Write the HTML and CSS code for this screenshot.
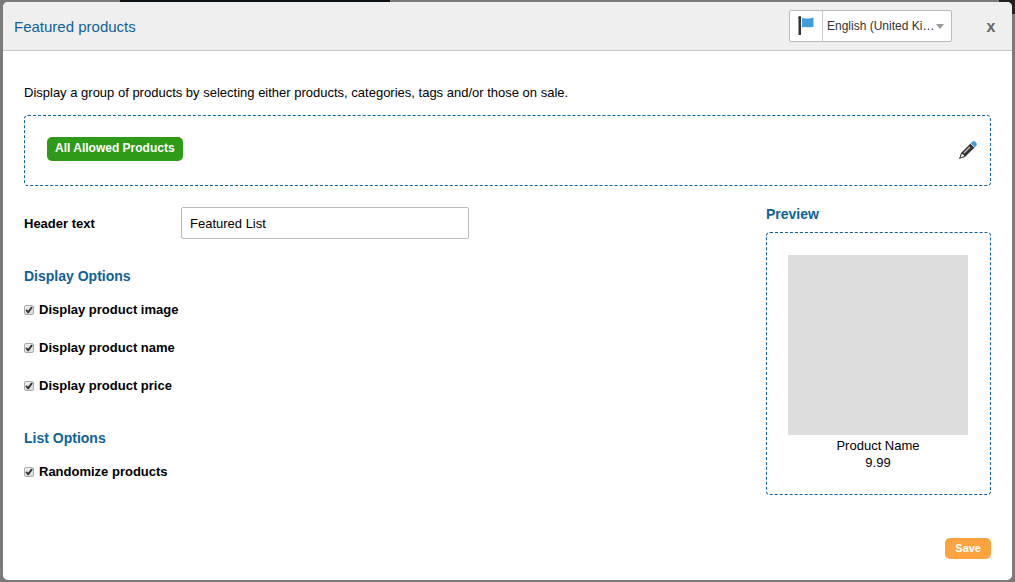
FILE: index.html
```html
<!DOCTYPE html>
<html lang="en">
<head>
    <meta charset="utf-8" />
    <title>Featured products</title>
    <link rel="stylesheet" href="styles.css">
</head>
<body>
    <div class="dialog" role="dialog" aria-labelledby="dialog-title">
        <header class="dialog-header">
            <h1 class="dialog-title" id="dialog-title">Featured products</h1>
            <div class="language">
                <label class="language-flag" for="language" aria-label="Language">
                    <svg width="16" height="20" viewBox="0 0 16 20">
                        <path d="M4 2.500C7 1.500 8.500 3.800 15.500 1.600V10.500C10 12.500 8 10 4 11.500Z" fill="#429ddb"/>
                        <path d="M.5 1H3V19H.5Z" fill="#333"/>
                        <circle cx="1.800" cy="1.500" r="1.500" fill="#333"/>
                    </svg>
                </label>
                <select class="language-select" id="language">
                    <option>English (United Kingdom)</option>
                </select>
                <span class="language-arrow"></span>
            </div>
            <button class="close" type="button">x</button>
        </header>

        <form class="dialog-body">
            <p class="intro">Display a group of products by selecting either products, categories, tags and/or those on sale.</p>

            <div class="selection dashed">
                <span class="tag">All Allowed Products</span>
                <button class="edit" type="button" aria-label="Edit">
                    <svg width="20" height="20" viewBox="0 0 20 20">
                        <path d="M1 19L3 13L12.500 3.500L16.500 7.500L7 17Z" fill="#333"/>
                        <path d="M2.500 17.500L4 13.500L6.500 16Z" fill="#fff"/>
                        <path d="M6 13L12 7" stroke="#c4c4c4" stroke-width="1.200"/>
                        <path d="M12.800 3.200L14.500 1.500Q16 .500 17.500 2L18 2.500Q19.500 4 18.500 5.500L16.800 7.200Z" fill="#429ddb"/>
                        <path d="M12.500 3.500L16.500 7.500" stroke="#b8dcf2"/>
                    </svg>
                </button>
            </div>

            <div class="columns">
                <div class="options">
                    <div class="field">
                        <label class="field-label" for="header-text">Header text</label>
                        <input class="field-input" id="header-text" type="text" value="Featured List">
                    </div>

                    <section class="group">
                        <h2 class="heading">Display Options</h2>
                        <label class="check"><input type="checkbox" checked>Display product image</label>
                        <label class="check"><input type="checkbox" checked>Display product name</label>
                        <label class="check"><input type="checkbox" checked>Display product price</label>
                    </section>

                    <section class="group">
                        <h2 class="heading">List Options</h2>
                        <label class="check"><input type="checkbox" checked>Randomize products</label>
                    </section>
                </div>

                <aside class="preview">
                    <h2 class="heading">Preview</h2>
                    <div class="preview-card dashed">
                        <div class="preview-image"></div>
                        <div>Product Name</div>
                        <div>9.99</div>
                    </div>
                </aside>
            </div>

            <div class="actions">
                <button class="save" type="button">Save</button>
            </div>
        </form>
    </div>
</body>
</html>
```

FILE: styles.css
```css
* {
    box-sizing: border-box;
}

body {
    margin: 0;
    padding: 2px 3px;
    min-height: 100vh;
    display: flex;
    background-color: #7b7b7b;
    /* slices of the page behind the dialog */
    background-image: linear-gradient(#0b1216, #0b1216), linear-gradient(#222, #222);
    background-size: 270px 2px, 16px 14px;
    background-position: 120px 0, right 0 top 0;
    background-repeat: no-repeat;
    color: #000;
    font: 13px/17px "Liberation Sans", Arial, sans-serif;
}

button, input, select {
    font: inherit;
    color: inherit;
}

button {
    border: 0;
    padding: 0;
    background: none;
    cursor: pointer;
}

svg {
    display: block;
}

.dialog {
    flex: 1;
    background: #fff;
    border-radius: 5px;
    overflow: hidden;
}

.dialog-header {
    display: flex;
    align-items: center;
    height: 49px;
    padding: 0 13px 0 11px;
    background: #efefef;
    border-bottom: 1px solid #c8c8c8;
}

.dialog-title {
    flex: 1;
    margin: 0;
    font-size: 15px;
    font-weight: normal;
    color: #0f6299;
}

.language {
    display: flex;
    align-items: center;
    width: 163px;
    height: 32px;
    background: #fff;
    border: 1px solid #bbb;
    border-radius: 2px;
}

.language-flag {
    display: flex;
    align-items: center;
    justify-content: center;
    width: 33px;
    height: 30px;
    border-right: 1px solid #ccc;
}

.language-select {
    flex: 1;
    min-width: 0;
    margin: 0 1px 0 4px;
    padding: 0;
    border: 0;
    background: none;
    appearance: none;
    font-size: 12px;
    color: #333;
    text-overflow: ellipsis;
    overflow: hidden;
    white-space: nowrap;
}

.language-arrow {
    margin-right: 7px;
    border: 4px solid transparent;
    border-top: 5px solid #999;
    border-bottom: 0;
}

.close {
    width: 16px;
    margin-left: 31px;
    font-size: 16px;
    font-weight: bold;
    color: #666;
}

.dialog-body {
    padding: 33px 21px 21px;
}

.intro {
    margin: 0 0 14px;
}

.dashed {
    border: 1px dashed #0f6299;
    border-radius: 4px;
}

.selection {
    display: flex;
    align-items: flex-start;
    justify-content: space-between;
    height: 71px;
    margin-bottom: 21px;
    padding: 21px 12px 0 22px;
}

.tag {
    padding: 3px 8px 4px;
    border-radius: 5px;
    background: #2e9a17;
    color: #fff;
    font-size: 12px;
    font-weight: bold;
}

.edit {
    margin-top: 3px;
}

.columns {
    display: flex;
    justify-content: space-between;
}

.field {
    display: flex;
    align-items: center;
}

.field-label {
    width: 157px;
    font-weight: bold;
}

.field-input {
    width: 288px;
    height: 32px;
    padding: 0 8px;
    border: 1px solid #bbb;
    border-radius: 2px;
}

.group {
    margin: 28px 0 34px;
}

.group + .group {
    margin: 0;
}

.heading {
    margin: 0 0 16px;
    font-size: 14px;
    line-height: 18px;
    color: #0f6299;
}

.check {
    display: flex;
    align-items: center;
    gap: 5px;
    line-height: 18px;
    font-weight: bold;
}

.check + .check {
    margin-top: 20px;
}

.check input {
    appearance: none;
    display: flex;
    align-items: center;
    justify-content: center;
    width: 10px;
    height: 10px;
    margin: 0;
    border: 1px solid #aaa;
    border-radius: 2px;
    background: linear-gradient(#eee, #ddd);
}

.check input:checked::before {
    content: "";
    width: 8px;
    height: 8px;
    background: #333;
    clip-path: polygon(6% 55%, 22% 42%, 38% 58%, 78% 5%, 98% 18%, 46% 90%, 34% 90%);
}

.preview {
    width: 225px;
    margin-top: -2px;
}

.preview .heading {
    margin-bottom: 9px;
}

.preview-card {
    padding: 22px 22px 23px 21px;
    text-align: center;
}

.preview-image {
    height: 180px;
    margin-bottom: 2px;
    background: #ddd;
}

.actions {
    display: flex;
    justify-content: flex-end;
    margin-top: 43px;
}

.save {
    padding: 2px 10px;
    border-radius: 5px;
    background: #fda33f;
    color: #fff;
    font-size: 11px;
    font-weight: bold;
    line-height: 17px;
}
```
